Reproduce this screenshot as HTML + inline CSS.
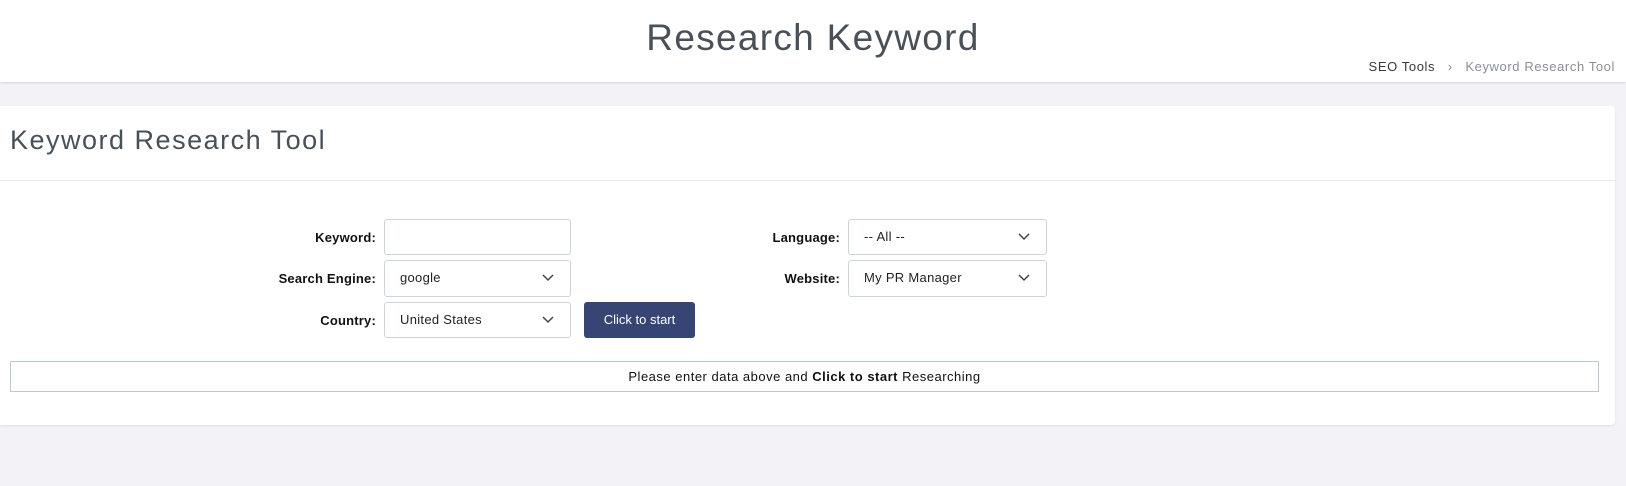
<!DOCTYPE html>
<html><head><meta charset="utf-8"><style>
body{margin:0;width:1626px;height:486px;background:#f2f2f7;font-family:"Liberation Sans",sans-serif;position:relative;overflow:hidden;color:#111}
.hdr{position:absolute;left:0;top:0;width:1626px;height:82px;background:#fff;box-shadow:0 1px 2px rgba(0,0,0,.12)}
.title{position:absolute;left:0;width:1626px;top:17px;text-align:center;font-size:37px;letter-spacing:1.3px;color:#495057}
.bc{position:absolute;right:11px;top:59px;font-size:13px;letter-spacing:0.6px;color:#343a40}
.bc span.g{color:#8a8f98}
.card{position:absolute;left:0;top:106px;width:1615px;height:319px;background:#fff;border-radius:0 4px 4px 0;box-shadow:0 1px 2px rgba(0,0,0,.08)}
.ct{position:absolute;left:10px;top:19px;font-size:27px;letter-spacing:1.5px;color:#495057}
.div{position:absolute;left:0;top:74px;width:1615px;height:1px;background:#e9ecef}
.lbl{position:absolute;font-size:13px;font-weight:bold;text-align:right;width:200px;letter-spacing:0.2px}
.in{position:absolute;height:36px;border:1px solid #ced4da;border-radius:3px;box-sizing:border-box;font-size:13px;line-height:34px;padding-left:15px;color:#222;letter-spacing:0.3px}
.in svg{position:absolute;right:16px;top:13px}
.btn{position:absolute;left:584px;top:196px;width:111px;height:36px;background:#364574;border-radius:3px;color:#fff;font-size:13px;text-align:center;line-height:36px}
.res{position:absolute;left:10px;top:255px;width:1589px;height:31px;border:1px solid #b9c9d6;box-sizing:border-box;text-align:center;font-size:13px;line-height:29px;letter-spacing:0.5px}
</style></head><body>
<div class="hdr"><div class="title">Research Keyword</div>
<div class="bc">SEO Tools &nbsp;&nbsp;<span class="g">›</span>&nbsp;&nbsp; <span class="g">Keyword Research Tool</span></div></div>
<div class="card">
<div class="ct">Keyword Research Tool</div><div class="div"></div>
<div class="lbl" style="left:176px;top:124px">Keyword:</div>
<div class="in" style="left:384px;top:113px;width:187px"></div>
<div class="lbl" style="left:176px;top:165px">Search Engine:</div>
<div class="in" style="left:384px;top:154px;width:187px;height:37px">google<svg width="12" height="8"><path d="M1 1l5 5 5-5" stroke="#444" stroke-width="1.5" fill="none"/></svg></div>
<div class="lbl" style="left:176px;top:207px">Country:</div>
<div class="in" style="left:384px;top:196px;width:187px">United States<svg width="12" height="8"><path d="M1 1l5 5 5-5" stroke="#444" stroke-width="1.5" fill="none"/></svg></div>
<div class="btn">Click to start</div>
<div class="lbl" style="left:640px;top:124px">Language:</div>
<div class="in" style="left:848px;top:113px;width:199px">-- All --<svg width="12" height="8"><path d="M1 1l5 5 5-5" stroke="#444" stroke-width="1.5" fill="none"/></svg></div>
<div class="lbl" style="left:640px;top:165px">Website:</div>
<div class="in" style="left:848px;top:154px;width:199px;height:37px">My PR Manager<svg width="12" height="8"><path d="M1 1l5 5 5-5" stroke="#444" stroke-width="1.5" fill="none"/></svg></div>
<div class="res">Please enter data above and <b>Click to start</b> Researching</div>
</div>
</body></html>
